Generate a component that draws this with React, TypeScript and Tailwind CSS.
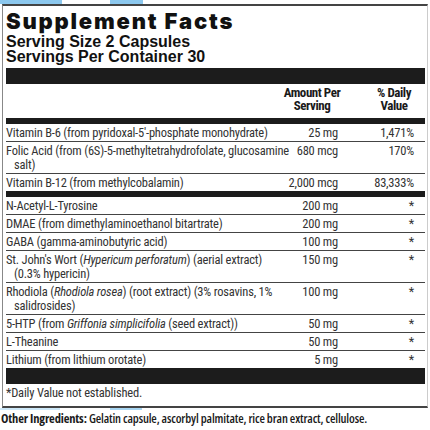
import React from "react"

interface Row {
    name: React.ReactNode
    amount: string
    dv: string
    thickAfter?: boolean
}

const cond = "font-['Roboto_Condensed','Roboto',sans-serif]"

const rows: Row[] = [
    { name: "Vitamin B-6 (from pyridoxal-5'-phosphate monohydrate)", amount: "25 mg", dv: "1,471%" },
    { name: "Folic Acid (from (6S)-5-methyltetrahydrofolate, glucosamine salt)", amount: "680 mcg", dv: "170%" },
    { name: "Vitamin B-12 (from methylcobalamin)", amount: "2,000 mcg", dv: "83,333%", thickAfter: true },
    { name: "N-Acetyl-L-Tyrosine", amount: "200 mg", dv: "*" },
    { name: "DMAE (from dimethylaminoethanol bitartrate)", amount: "200 mg", dv: "*" },
    { name: "GABA (gamma-aminobutyric acid)", amount: "100 mg", dv: "*" },
    {
        name: (
            <>
                St. John's Wort (<i>Hypericum perforatum</i>) (aerial extract) (0.3% hypericin)
            </>
        ),
        amount: "150 mg",
        dv: "*"
    },
    {
        name: (
            <>
                Rhodiola (<i>Rhodiola rosea</i>) (root extract) (3% rosavins, 1% salidrosides)
            </>
        ),
        amount: "100 mg",
        dv: "*"
    },
    {
        name: (
            <>
                5-HTP (from <i>Griffonia simplicifolia</i> (seed extract))
            </>
        ),
        amount: "50 mg",
        dv: "*"
    },
    { name: "L-Theanine", amount: "50 mg", dv: "*" },
    { name: "Lithium (from lithium orotate)", amount: "5 mg", dv: "*" }
]

export default function App() {
    return (
        <div className="w-[430px] h-[430px] bg-white overflow-hidden text-[#222]">
            <div className="flex h-[4px]">
                <div className="w-[62px] bg-[#8cc8ee]" />
                <div className="w-[48px]" />
                <div className="w-[33px] bg-[#8cc8ee]" />
            </div>
            <div className="mx-[2px] border-l border-l-[#888] border-r border-r-[#ccc] border-t-2 border-t-[#444] border-b-2 border-b-[#444] pl-[3px] pr-[2px] pt-[2px] pb-[6px]">
                <h1 className="font-['Inter',sans-serif] font-black text-[22px] leading-[26px] tracking-[1.8px] text-[#111]">
                    Supplement Facts
                </h1>
                <div className="font-['Liberation_Sans',Arial,sans-serif] font-bold text-[16px] leading-[15px] text-[#111]">
                    <div>Serving Size 2 Capsules</div>
                    <div>Servings Per Container 30</div>
                </div>
                <div className="h-[16px] bg-[#1c1c1c] mt-[4px]" />
                <div className={`${cond} font-bold text-[13px] leading-[13px] tracking-[-0.45px] flex text-[#1a1a1a] pt-[2px] h-[34px]`}>
                    <div className="w-[280px]" />
                    <div className="w-[52px] flex justify-center whitespace-nowrap">
                        <div className="text-center">Amount Per<br />Serving</div>
                    </div>
                    <div className="w-[76px] pl-[36px] flex justify-center whitespace-nowrap">
                        <div className="text-center">% Daily<br />Value</div>
                    </div>
                </div>
                <div className="h-[6px] bg-[#1c1c1c]" />
                <div className={`${cond} text-[12.5px] leading-[14px] tracking-[-0.2px] text-[#333]`}>
                    {rows.map((row, i) => (
                        <div
                            key={i}
                            className={`flex pt-[2px] pb-[1px] ${
                                row.thickAfter
                                    ? "border-b-[6px] border-b-[#1c1c1c]"
                                    : i === rows.length - 1
                                      ? ""
                                      : "border-b border-b-[#444]"
                            }`}
                        >
                            <div className="w-[284px] pl-[8px] -indent-[8px]">{row.name}</div>
                            <div className="w-[48px] flex justify-end whitespace-nowrap">{row.amount}</div>
                            <div className="w-[76px] flex justify-end whitespace-nowrap">{row.dv}</div>
                        </div>
                    ))}
                </div>
                <div className="h-[16px] bg-[#1c1c1c]" />
                <div className={`${cond} text-[12.5px] leading-[14px] tracking-[-0.2px] pt-[2px] text-[#333]`}>
                    *Daily Value not established.
                </div>
            </div>
            <div className="flex h-[2px]">
                <div className="w-[60px] bg-[#cde8f8]" />
                <div className="w-[50px]" />
                <div className="w-[32px] bg-[#a8d6f2]" />
            </div>
            <div className="font-['Open_Sans',sans-serif] [font-stretch:75%] font-semibold text-[12.5px] leading-[16px] tracking-[-0.15px] text-[#1a1a1a] pl-[1px] pt-[1px] whitespace-nowrap">
                <span className="font-bold">Other Ingredients:</span> Gelatin capsule, ascorbyl palmitate, rice bran extract, cellulose.
            </div>
        </div>
    )
}
